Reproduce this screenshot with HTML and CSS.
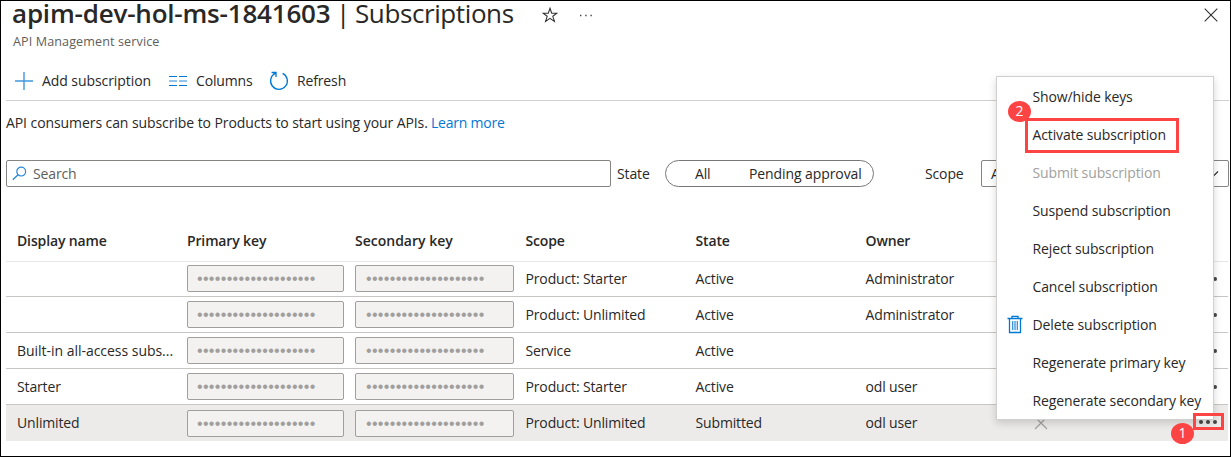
FILE: index.html
```html
<!DOCTYPE html>
<html lang="en">
<head>
<meta charset="utf-8">
<title>Subscriptions</title>
<link rel="stylesheet" href="styles.css">
</head>
<body>
<div class="page">
  <header class="header">
    <h1 class="title"><span class="title-name">apim-dev-hol-ms-1841603</span><span class="title-bar">|</span><span class="title-section">Subscriptions</span></h1>
    <svg class="star" width="16" height="16" viewBox="0 0 16 16"><path d="M8 1.3 9.7 6.2H14.9L10.8 9.3 12.4 14.4 8 11.3 3.6 14.4 5.2 9.3 1.1 6.2H6.3Z" fill="none" stroke="#323130" stroke-width="1.1"/></svg>
    <svg class="more" width="14" height="4" viewBox="0 0 14 4"><path d="M1 1.5h1.4M6.2 1.5h1.4M11.4 1.5h1.4" stroke="#444" stroke-width="1.3"/></svg>
    <svg class="close" width="14" height="14" viewBox="0 0 14 14"><path d="M.7.7 13.3 13.3M13.3.7.7 13.3" stroke="#323130" stroke-width="1.1"/></svg>
  </header>
  <p class="subtitle">API Management service</p>
  <nav class="toolbar">
    <svg class="plus" width="18" height="18" viewBox="0 0 18 18"><path d="M9 0v18M0 9h18" stroke="#3f98e0" stroke-width="1.4"/></svg>
    <span class="cmd cmd-add">Add subscription</span>
    <svg class="columns" width="18" height="12" viewBox="0 0 18 12"><path d="M0 1.5h8M10 1.5h8M0 10.5h8M10 10.5h8" stroke="#0078d4"/><path d="M0 6h8M10 6h8" stroke="#6cb0e8" stroke-width="1.6"/></svg>
    <span class="cmd cmd-columns">Columns</span>
    <svg class="refresh" width="20" height="20" viewBox="0 0 20 20"><path d="M13.6 2.3A8.4 8.4 0 1 1 6.6 2.2M2.6 1.5H7V6" fill="none" stroke="#0078d4" stroke-width="1.3"/></svg>
    <span class="cmd cmd-refresh">Refresh</span>
  </nav>
  <p class="intro"><span class="intro-text">API consumers can subscribe to Products to start using your APIs.</span><a class="link">Learn more</a></p>
  <div class="filters">
    <div class="search">
      <svg width="15" height="15" viewBox="0 0 15 15"><circle cx="9.2" cy="5.6" r="4.4" fill="none" stroke="#2b88d8" stroke-width="1.2"/><path d="M6 8.8.8 13.8" stroke="#2b88d8" stroke-width="1.4"/></svg>
      <span class="search-text">Search</span>
    </div>
    <span class="label label-state">State</span>
    <div class="pill"><span class="pill-all">All</span><span class="pill-pending">Pending approval</span></div>
    <span class="label label-scope">Scope</span>
    <div class="select"><span>All</span><svg width="12" height="8" viewBox="0 0 12 8"><path d="M1 1.5 6 6.5 11 1.5" fill="none" stroke="#323130" stroke-width="1.2"/></svg></div>
  </div>
  <div class="table">
    <div class="row head"><span class="h-display">Display name</span><span class="h-primary">Primary key</span><span class="h-secondary">Secondary key</span><span class="h-scope">Scope</span><span>State</span><span>Owner</span></div>
    <div class="row first"><span></span><span class="key">••••••••••••••••••••</span><span class="key key-wide">••••••••••••••••••••</span><span>Product: Starter</span><span>Active</span><span>Administrator</span><span></span><span class="dots"><i></i><i></i><i></i></span></div>
    <div class="row"><span></span><span class="key">••••••••••••••••••••</span><span class="key key-wide">••••••••••••••••••••</span><span>Product: Unlimited</span><span>Active</span><span>Administrator</span><span></span><span class="dots"><i></i><i></i><i></i></span></div>
    <div class="row"><span class="long">Built-in all-access subs...</span><span class="key">••••••••••••••••••••</span><span class="key key-wide">••••••••••••••••••••</span><span>Service</span><span>Active</span><span></span><span></span><span class="dots"><i></i><i></i><i></i></span></div>
    <div class="row"><span>Starter</span><span class="key">••••••••••••••••••••</span><span class="key key-wide">••••••••••••••••••••</span><span>Product: Starter</span><span>Active</span><span>odl user</span><span></span><span class="dots"><i></i><i></i><i></i></span></div>
    <div class="row selected"><span>Unlimited</span><span class="key">••••••••••••••••••••</span><span class="key key-wide">••••••••••••••••••••</span><span>Product: Unlimited</span><span>Submitted</span><span>odl user</span><svg class="cross" width="14" height="14" viewBox="0 0 14 14"><path d="M1 1 13 13M13 1 1 13" stroke="#a19f9d" stroke-width="1.1"/></svg><span class="dots"><i></i><i></i><i></i></span></div>
  </div>
  <div class="menu">
    <div class="item">Show/hide keys</div>
    <div class="item">Activate subscription</div>
    <div class="item disabled">Submit subscription</div>
    <div class="item">Suspend subscription</div>
    <div class="item">Reject subscription</div>
    <div class="item">Cancel subscription</div>
    <div class="item"><svg class="trash" width="16" height="19" viewBox="0 0 16 19"><path d="M.5 3.5h15M5 3.2V1.4h6v1.8M2.5 3.8V17.5h11V3.8" fill="none" stroke="#0078d4" stroke-width="1.3"/><path d="M5.7 6v9M8 6v9M10.3 6v9" stroke="#2b88d8" stroke-width="1.2"/></svg>Delete subscription</div>
    <div class="item">Regenerate primary key</div>
    <div class="item">Regenerate secondary key</div>
  </div>
  <div class="mark mark-activate"></div>
  <div class="badge badge-two">2</div>
  <div class="mark mark-more"></div>
  <div class="badge badge-one">1</div>
</div>
</body>
</html>
```
FILE: styles.css
```css
* { box-sizing: border-box; }
body { margin: 0; background: #fff; }
.page {
  position: relative;
  width: 1231px;
  height: 457px;
  overflow: hidden;
  border: 1px solid #000;
  padding-left: 5px;
  font: 14px/20px "Open Sans", "Noto Sans", sans-serif;
  letter-spacing: -0.14px;
  color: #292827;
  white-space: nowrap;
}
p, h1 { margin: 0; }
svg { display: block; flex: none; }

.header { display: flex; height: 30px; padding-left: 6px; }
.title { display: flex; width: 530px; font-size: 26px; line-height: 25px; font-weight: 400; }
.title-name { width: 324px; font-weight: 600; letter-spacing: -0.2px; }
.title-bar { width: 19px; }
.title-section { letter-spacing: -0.4px; }
.star { margin-top: 6px; }
.more { margin: 13px 0 0 21px; }
.close { margin: 7px 12px 0 auto; }
.subtitle { padding-left: 7px; height: 20px; font-size: 12.6px; line-height: 21px; color: #605e5c; letter-spacing: 0.1px; }

.toolbar { display: flex; align-items: center; height: 50px; padding: 10px 0 0 9px; margin-right: 1px; border-bottom: 1px solid #d2d0ce; }
.plus { margin-right: 9px; }
.cmd-add { width: 127px; letter-spacing: -0.07px; }
.columns { margin-right: 9px; }
.cmd-columns { width: 73px; }
.refresh { margin-right: 8px; }
.intro { display: flex; height: 59px; padding-top: 12px; }
.intro-text { width: 425px; letter-spacing: -0.08px; }
.link { color: #0078d4; letter-spacing: -0.22px; }

.filters { display: flex; height: 27px; align-items: center; }
.search { display: flex; align-items: center; width: 605px; height: 27px; border: 1px solid #868482; border-radius: 2px; padding-left: 5px; }
.search-text { margin-left: 6px; color: #605e5c; }
.label-state { width: 48px; margin-left: 6px; padding-top: 1px; }
.pill { display: flex; align-items: center; width: 209px; height: 27px; border: 1px solid #777; border-radius: 14px; padding-left: 29px; }
.pill-all { width: 54px; }
.pill-pending { letter-spacing: -0.09px; }
.label-scope { margin-left: 51px; width: 56px; padding-top: 1px; }
.select { display: flex; align-items: center; justify-content: space-between; width: 248px; height: 27px; border: 1px solid #868482; border-radius: 2px; padding: 0 9px; }

.table { padding-top: 34px; margin-right: 2px; }
.row {
  display: grid;
  grid-template-columns: 170px 168px 170.5px 170px 170px 168px 155px 30px;
  align-items: center;
  height: 36px;
  padding-left: 11px;
  border-bottom: 1px solid #c8c6c4;
}
.head { height: 41px; font-weight: 600; border-bottom-color: #e7e6e5; }
.h-secondary { letter-spacing: 0; }
.first { height: 35px; }
.first .key { margin-bottom: 1px; }
.long { letter-spacing: -0.03px; }
.selected { background: #edebe9; border-bottom: 0; }
.key {
  width: 157px;
  height: 27px;
  padding-left: 9px;
  border: 1px solid #a19f9d;
  border-radius: 2px;
  background: #f3f2f1;
  color: #a19f9d;
  font: 16px/25px "Liberation Sans", sans-serif;
  letter-spacing: 0.33px;
}
.key-wide { width: 159px; padding-left: 10px; }
.dots { display: flex; gap: 3px; padding-left: 10px; }
.dots i { width: 4px; height: 4px; border-radius: 50%; background: #484644; }
.selected .dots { padding-bottom: 2px; }

.menu {
  position: absolute;
  left: 995px;
  top: 75px;
  width: 218px;
  height: 344px;
  padding-top: 1px;
  border: 1px solid #d2d0ce;
  background: #fff;
  box-shadow: 0 3px 8px rgba(0, 0, 0, .16);
}
.item { position: relative; height: 38px; padding-left: 35.5px; line-height: 38px; letter-spacing: -0.12px; }
.disabled { color: #a19f9d; }
.trash { position: absolute; left: 10px; top: 9px; }
.mark { position: absolute; border: 3px solid #fc4444; }
.mark-activate { left: 1024px; top: 117px; width: 154px; height: 35px; }
.mark-more { left: 1192px; top: 412px; width: 31px; height: 17px; }
.badge {
  position: absolute;
  width: 23px;
  height: 21px;
  border-radius: 50%;
  background: #fc4444;
  color: #fff;
  font-size: 14px;
  line-height: 20px;
  text-align: center;
}
.badge-two { left: 1007px; top: 100px; }
.badge-one { left: 1170px; top: 422px; }
```
